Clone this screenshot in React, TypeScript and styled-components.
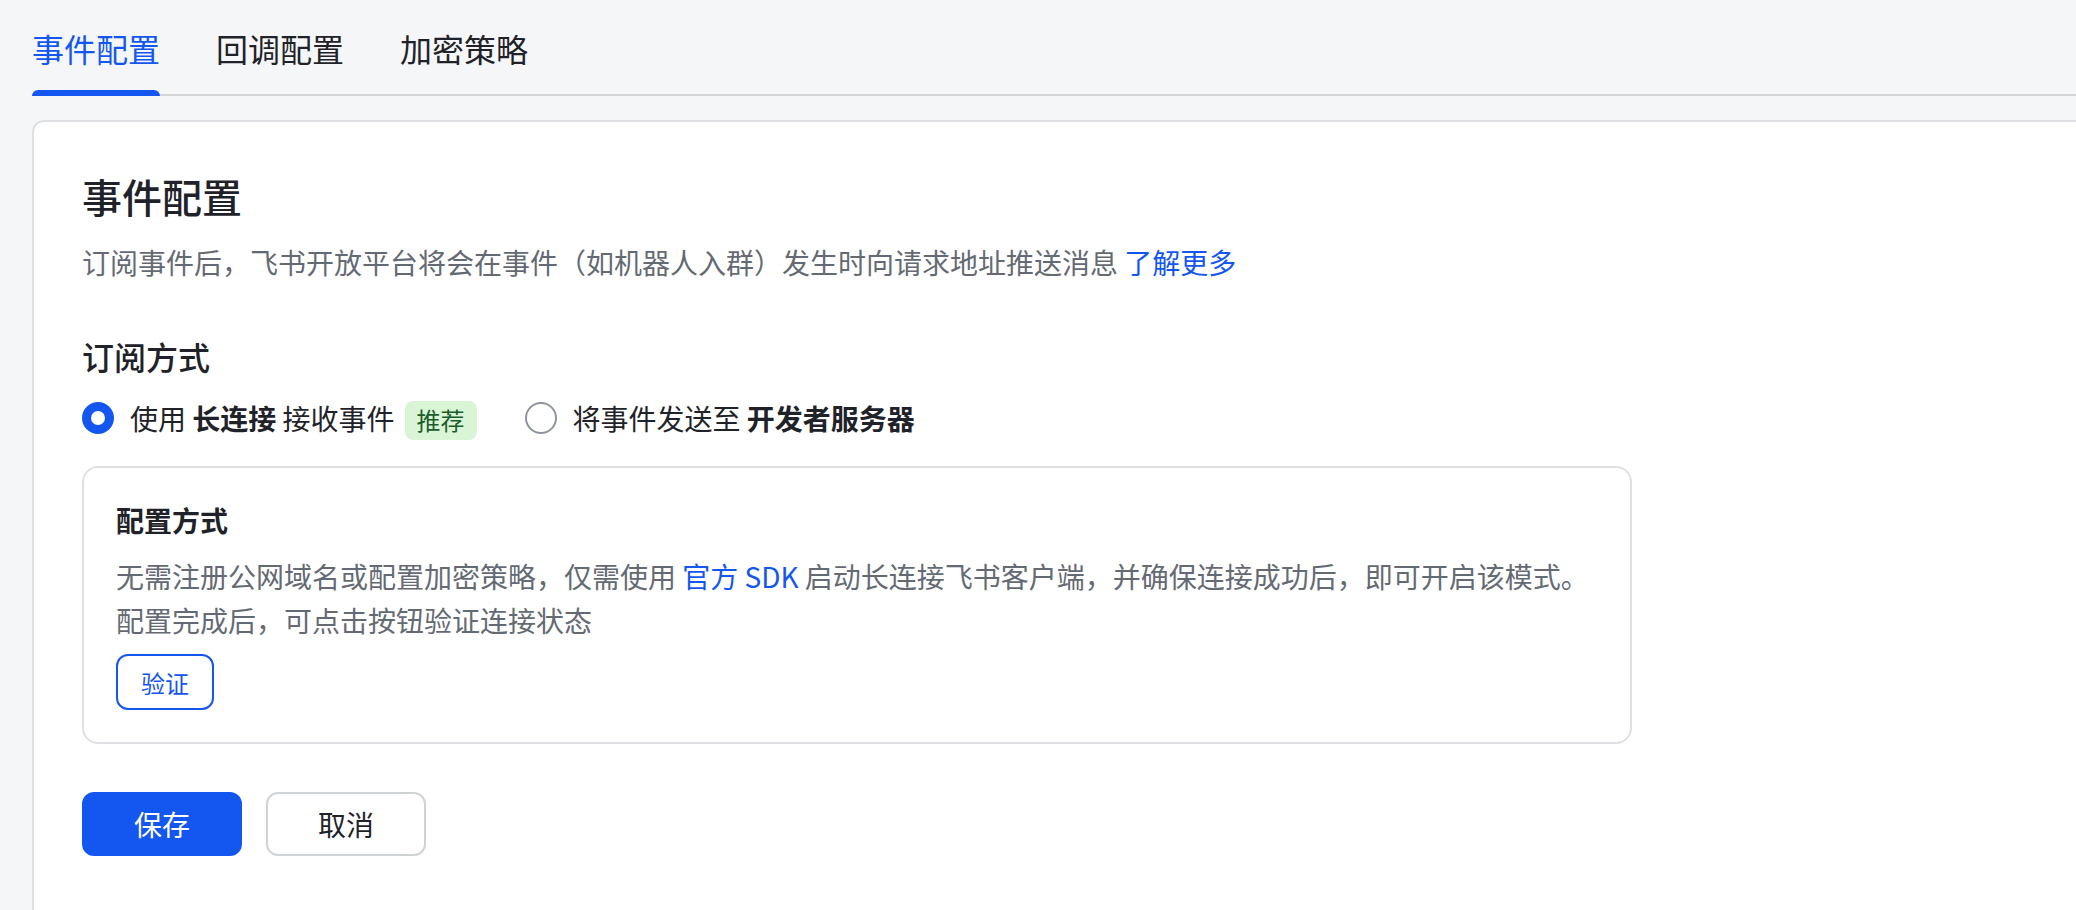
import React from 'react';
import styled, { createGlobalStyle } from 'styled-components';

const GlobalStyle = createGlobalStyle`
  html, body {
    margin: 0;
    padding: 0;
    background: #f5f6f7;
    overflow: hidden;
    font-family: "Noto Sans CJK SC", "Noto Sans", sans-serif;
  }
  * {
    box-sizing: border-box;
  }
`;

const StyledPage = styled.div`
  width: 2076px;
  height: 910px;
  padding-left: 32px;
`;

const StyledTabBar = styled.div`
  display: flex;
  gap: 56px;
  height: 96px;
  box-shadow: inset 0 -2px 0 #d5d6d9;
`;

const StyledTab = styled.div<{ active?: boolean }>`
  position: relative;
  padding: 24px 0;
  font-size: 32px;
  line-height: 48px;
  color: ${props => (props.active ? '#1456f0' : '#1f2329')};

  &::after {
    content: '';
    display: ${props => (props.active ? 'block' : 'none')};
    position: absolute;
    left: 0;
    right: 0;
    bottom: 0;
    height: 6px;
    border-radius: 6px 6px 0 0;
    background: #1456f0;
  }
`;

const StyledCard = styled.div`
  margin: 24px -60px 0 0;
  min-height: 900px;
  background: #fff;
  border: 2px solid #dee0e3;
  border-radius: 12px;
  padding: 46px 48px;
`;

const StyledTitle = styled.div`
  font-size: 40px;
  line-height: 56px;
  font-weight: 500;
  color: #1f2329;
`;

const StyledDesc = styled.div`
  margin-top: 16px;
  font-size: 28px;
  line-height: 44px;
  color: #646a73;
`;

const StyledLink = styled.span`
  color: #1456f0;
`;

const StyledSection = styled.div`
  margin-top: 48px;
  font-size: 32px;
  line-height: 48px;
  font-weight: 500;
  color: #1f2329;
`;

const StyledRadioRow = styled.div`
  margin-top: 16px;
  height: 44px;
  display: flex;
  align-items: center;
  gap: 48px;
`;

const StyledOption = styled.div`
  display: flex;
  align-items: center;
  gap: 16px;
  font-size: 28px;
  line-height: 44px;
  color: #1f2329;
  white-space: nowrap;
`;

const StyledRadio = styled.span<{ checked?: boolean }>`
  width: 32px;
  height: 32px;
  border-radius: 50%;
  background: #fff;
  border: ${props => (props.checked ? '9px solid #1456f0' : '2px solid #8f959e')};
`;

const StyledBold = styled.b`
  font-weight: 700;
`;

const StyledTag = styled.span`
  margin-left: 10px;
  height: 39px;
  padding: 0 12px;
  display: inline-flex;
  align-items: center;
  border-radius: 8px;
  background: #d9f5d6;
  color: #1c5d2b;
  font-size: 24px;
`;

const StyledBox = styled.div`
  margin-top: 26px;
  width: 1550px;
  border: 2px solid #dee0e3;
  border-radius: 16px;
  padding: 30px 32px 32px;
`;

const StyledBoxTitle = styled.div`
  font-size: 28px;
  line-height: 44px;
  font-weight: 700;
  color: #1f2329;
`;

const StyledBoxText = styled.div`
  margin-top: 12px;
  font-size: 28px;
  line-height: 44px;
  color: #646a73;
  white-space: nowrap;

  & + & {
    margin-top: 0;
  }
`;

const StyledVerify = styled.button`
  margin-top: 12px;
  height: 56px;
  padding: 0 23px;
  border: 2px solid #1456f0;
  border-radius: 12px;
  background: #fff;
  color: #1456f0;
  font-family: inherit;
  font-size: 24px;
`;

const StyledActions = styled.div`
  margin-top: 48px;
  display: flex;
  gap: 24px;
`;

const StyledButton = styled.button<{ primary?: boolean }>`
  width: 160px;
  height: 64px;
  border-radius: 12px;
  font-family: inherit;
  font-size: 28px;
  border: 2px solid ${props => (props.primary ? '#1456f0' : '#d0d3d6')};
  background: ${props => (props.primary ? '#1456f0' : '#fff')};
  color: ${props => (props.primary ? '#fff' : '#1f2329')};
`;

const tabs = ['事件配置', '回调配置', '加密策略'];

export default function App() {
  return (
    <StyledPage>
      <GlobalStyle />
      <StyledTabBar>
        {tabs.map((tab, index) => (
          <StyledTab key={tab} active={index === 0}>{tab}</StyledTab>
        ))}
      </StyledTabBar>
      <StyledCard>
        <StyledTitle>事件配置</StyledTitle>
        <StyledDesc>
          订阅事件后，飞书开放平台将会在事件（如机器人入群）发生时向请求地址推送消息 <StyledLink>了解更多</StyledLink>
        </StyledDesc>
        <StyledSection>订阅方式</StyledSection>
        <StyledRadioRow>
          <StyledOption>
            <StyledRadio checked />
            <span>
              使用 <StyledBold>长连接</StyledBold> 接收事件
              <StyledTag>推荐</StyledTag>
            </span>
          </StyledOption>
          <StyledOption>
            <StyledRadio />
            <span>
              将事件发送至 <StyledBold>开发者服务器</StyledBold>
            </span>
          </StyledOption>
        </StyledRadioRow>
        <StyledBox>
          <StyledBoxTitle>配置方式</StyledBoxTitle>
          <StyledBoxText>
            无需注册公网域名或配置加密策略，仅需使用 <StyledLink>官方 SDK</StyledLink> 启动长连接飞书客户端，并确保连接成功后，即可开启该模式。
          </StyledBoxText>
          <StyledBoxText>配置完成后，可点击按钮验证连接状态</StyledBoxText>
          <StyledVerify>验证</StyledVerify>
        </StyledBox>
        <StyledActions>
          <StyledButton primary>保存</StyledButton>
          <StyledButton>取消</StyledButton>
        </StyledActions>
      </StyledCard>
    </StyledPage>
  );
}
